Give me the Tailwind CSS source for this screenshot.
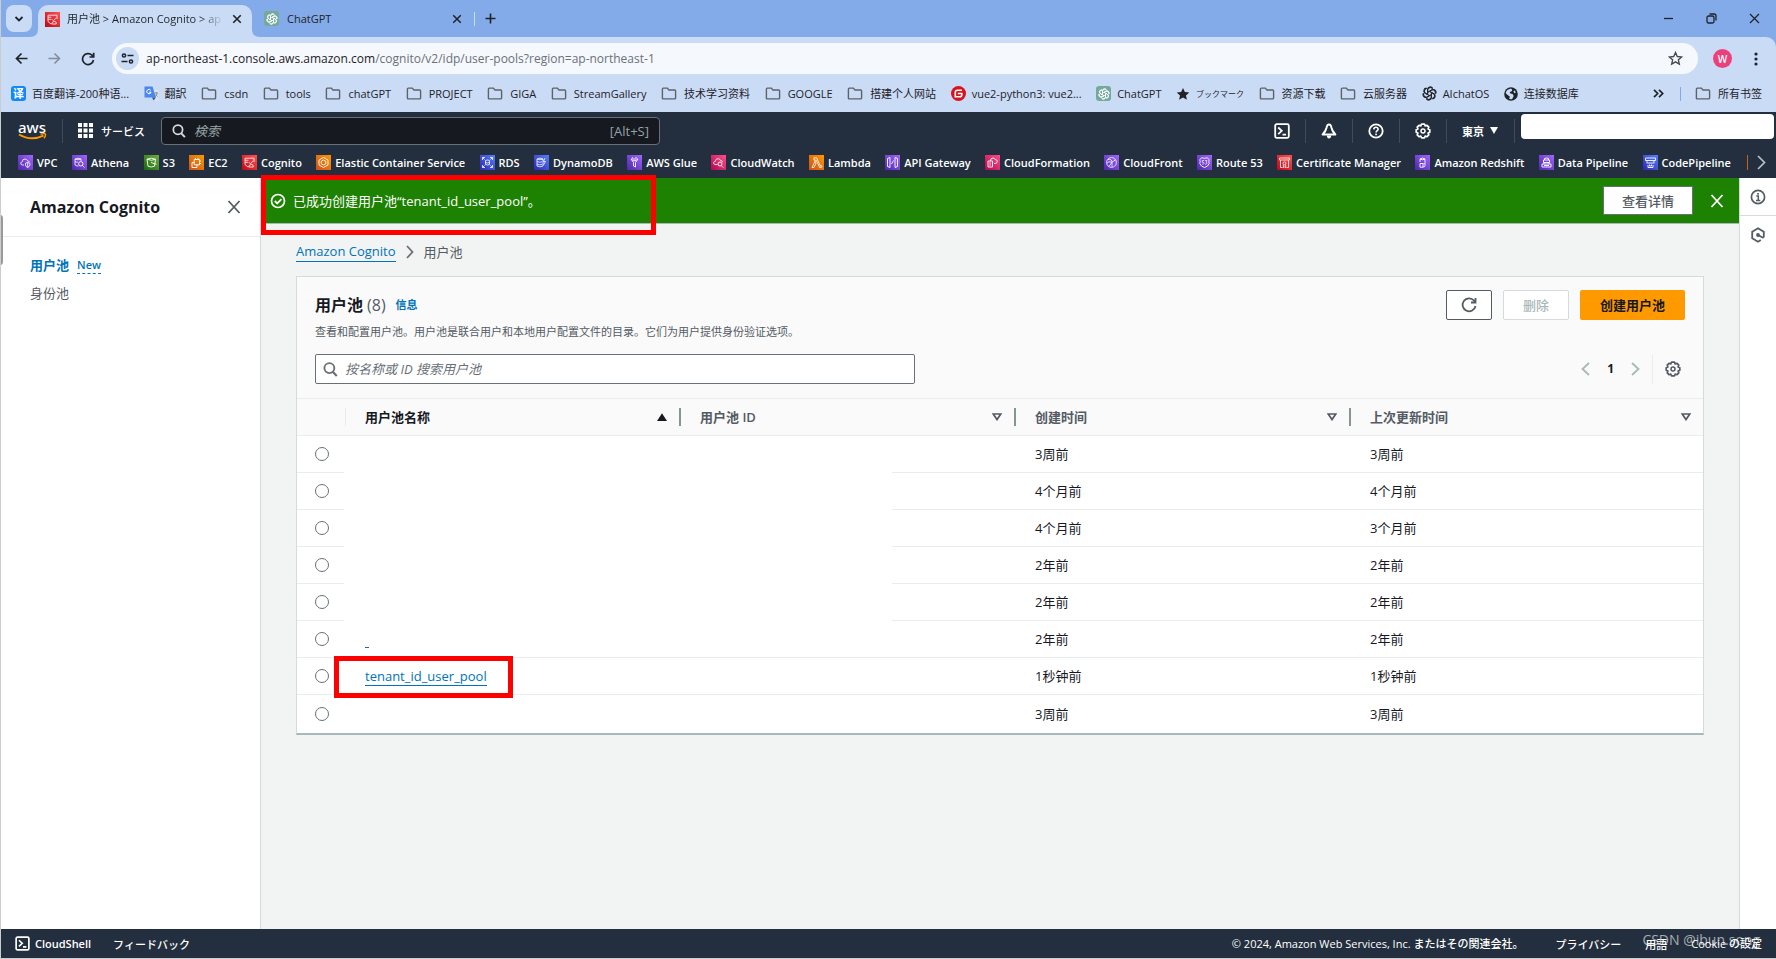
<!DOCTYPE html>
<html lang="zh-CN">
<head>
<meta charset="utf-8">
<title>用户池 &gt; Amazon Cognito</title>
<script src="https://cdn.jsdelivr.net/npm/@tailwindcss/browser@4"></script>
</head>
<body class="relative flex min-h-screen flex-col overflow-x-hidden border-b border-l border-[#c9cdd2] bg-[#f2f3f3] font-['Open_Sans','Noto_Sans_CJK_SC',sans-serif] text-[13px] leading-5 text-[#16191f]">

<svg class="absolute size-0" aria-hidden="true">
  <defs>
    <linearGradient id="gp" x1="0" y1="1" x2="1" y2="0"><stop offset="0" stop-color="#4d27aa"/><stop offset="1" stop-color="#a166ff"/></linearGradient>
    <linearGradient id="gg" x1="0" y1="1" x2="1" y2="0"><stop offset="0" stop-color="#1b660f"/><stop offset="1" stop-color="#6cae3e"/></linearGradient>
    <linearGradient id="go" x1="0" y1="1" x2="1" y2="0"><stop offset="0" stop-color="#c8511b"/><stop offset="1" stop-color="#ff9900"/></linearGradient>
    <linearGradient id="gr" x1="0" y1="1" x2="1" y2="0"><stop offset="0" stop-color="#bd0816"/><stop offset="1" stop-color="#ff5252"/></linearGradient>
    <linearGradient id="gb" x1="0" y1="1" x2="1" y2="0"><stop offset="0" stop-color="#2e27ad"/><stop offset="1" stop-color="#527fff"/></linearGradient>
    <linearGradient id="gk" x1="0" y1="1" x2="1" y2="0"><stop offset="0" stop-color="#b0084d"/><stop offset="1" stop-color="#ff4f8b"/></linearGradient>
    <symbol id="folder" viewBox="0 0 16 14"><path d="M1.8 1.2h4.4l1.7 2h6.3q.9 0 .9.9v7.8q0 .9-.9.9H1.8q-.9 0-.9-.9V2.1q0-.9.9-.9z" fill="none" stroke="#5f6368" stroke-width="1.5"/></symbol>
    <symbol id="knot" viewBox="0 0 24 24"><g fill="none" stroke="currentColor" stroke-width="1.7"><path id="kn" d="M9 10.3V5.6a4.3 4.3 0 0 1 8-2.1M9 10.3l6.5-3.8a4.3 4.3 0 0 1 5.3 6.2"/><use href="#kn" transform="rotate(60 12 12)"/><use href="#kn" transform="rotate(120 12 12)"/><use href="#kn" transform="rotate(180 12 12)"/><use href="#kn" transform="rotate(240 12 12)"/><use href="#kn" transform="rotate(300 12 12)"/></g></symbol>
    <symbol id="gear" viewBox="0 0 16 16"><path d="M6.500 1.200h3l.7 1.700 1.800-.6 1.800 1.900-.7 1.700 1.700.8v2.600l-1.700.8.7 1.700-1.800 1.900-1.800-.6-.7 1.700h-3l-.7-1.700-1.800.6-1.800-1.900.7-1.700-1.700-.8V6.700l1.700-.8-.7-1.700L4 2.300l1.800.6z" fill="none" stroke="currentColor" stroke-width="1.700" stroke-linejoin="round"/><circle cx="8" cy="8" r="2" fill="none" stroke="currentColor" stroke-width="1.500"/></symbol>
    <symbol id="cross" viewBox="0 0 16 16"><path d="M2.500 2l11 12M13.500 2l-11 12" fill="none" stroke="currentColor" stroke-width="1.800"/></symbol>
    <symbol id="lens" viewBox="0 0 16 16"><circle cx="6.800" cy="6.500" r="5.300" fill="none" stroke="currentColor" stroke-width="2"/><path d="M10.400 10.400l4.300 4.600" stroke="currentColor" stroke-width="2.300"/></symbol>
    <symbol id="shell" viewBox="0 0 16 16"><rect x="1.200" y="1.200" width="13.600" height="13.600" rx="1.500" fill="none" stroke="currentColor" stroke-width="1.800"/><path d="M4.200 4.500l3.600 3.300-3.600 3.300M8.500 11.600h3.600" fill="none" stroke="currentColor" stroke-width="1.700"/></symbol>
    <symbol id="cog" viewBox="0 0 15 15"><rect width="15" height="15" fill="url(#gr)"/><path d="M3 5V3.200h9V7M3 5.200h3.400M3 7.300h3.400M6 12l-3-2.500V5M7.200 7.500l1.300 1.300 2.300-2.600M6.500 12h4.800q.6-2-1.600-2.600-2.600 0-3.200 2.600z" fill="none" stroke="#fff" stroke-width=".8"/></symbol>
    <symbol id="sort" viewBox="0 0 10 8"><path d="M1.200 1h7.600L5 6.600z" fill="none" stroke="#545b64" stroke-width="1.700"/></symbol>
  </defs>
</svg>

<!-- Tab strip -->
<header class="flex flex-col bg-[#84abe9] text-[12px] text-[#1f2328]">
  <div class="flex h-[37px] items-center pl-[5px] pr-4">
    <button aria-label="标签页搜索" class="flex h-[27px] w-[26px] items-center justify-center rounded-lg bg-[#cadbf6]"><svg class="size-[10px]" viewBox="0 0 10 10"><path d="M1.500 3L5 6.500 8.500 3" fill="none" stroke="#1f2328" stroke-width="1.800"/></svg></button>
    <div class="relative ml-1.5 flex h-8 w-[214px] items-center self-end rounded-t-[10px] bg-[#cadbf6] pb-1 pl-[7px] pr-2.5">
      <svg class="absolute -left-2 bottom-0 size-2" viewBox="0 0 8 8"><path d="M8 0v8H0q8 0 8-8z" fill="#cadbf6"/></svg>
      <svg class="absolute -right-2 bottom-0 size-2" viewBox="0 0 8 8"><path d="M0 0v8h8q-8 0-8-8z" fill="#cadbf6"/></svg>
      <svg class="size-[15px] shrink-0"><use href="#cog"/></svg>
      <span class="ml-[7px] w-[156px] whitespace-nowrap bg-linear-to-r from-[#1f2328] from-85% to-[#cadbf6] bg-clip-text text-[11px] text-transparent">用户池 &gt; Amazon Cognito &gt; ap</span>
      <button aria-label="关闭" class="ml-auto"><svg class="size-[10px]" viewBox="0 0 16 16"><path d="M2 2l12 12M14 2L2 14" stroke="#1f2328" stroke-width="2.600"/></svg></button>
    </div>
    <div class="flex w-[210px] items-center pl-3 text-[11px]">
      <span class="flex size-[15px] items-center justify-center rounded-[3px] bg-[#74aa9c] text-white"><svg class="size-3"><use href="#knot"/></svg></span>
      <span class="ml-2">ChatGPT</span>
      <button aria-label="关闭" class="ml-auto"><svg class="size-[10px]" viewBox="0 0 16 16"><path d="M2 2l12 12M14 2L2 14" stroke="#1f2328" stroke-width="2.400"/></svg></button>
    </div>
    <span class="ml-3 h-[14px] w-px bg-[#cadbf6]"></span>
    <button aria-label="新标签页" class="ml-2.5"><svg class="size-[11px]" viewBox="0 0 11 11"><path d="M5.500.500v10M.500 5.500h10" stroke="#1f2328" stroke-width="1.600"/></svg></button>
    <div class="ml-auto flex items-center gap-8">
      <button aria-label="最小化"><svg class="size-[11px]" viewBox="0 0 11 11"><path d="M1 5.500h9" stroke="#1f2328" stroke-width="1.300"/></svg></button>
      <button aria-label="还原"><svg class="size-[11px]" viewBox="0 0 11 11"><rect x="1" y="3" width="7" height="7" rx="1.500" fill="none" stroke="#1f2328" stroke-width="1.300"/><path d="M3.500 1h4.500q2 0 2 2v4.500" fill="none" stroke="#1f2328" stroke-width="1.300"/></svg></button>
      <button aria-label="关闭窗口"><svg class="size-[11px]" viewBox="0 0 11 11"><path d="M1 1l9 9M10 1l-9 9" stroke="#1f2328" stroke-width="1.200"/></svg></button>
    </div>
  </div>

  <!-- Toolbar -->
  <div class="flex h-[43px] items-center rounded-tr-[10px] bg-[#cadbf6] pl-[14px] pr-[18px]">
    <button aria-label="后退"><svg class="size-[13px]" viewBox="0 0 13 13"><path d="M12.500 6.500H1.500M6.500 1.500l-5 5 5 5" fill="none" stroke="#1f2328" stroke-width="1.700"/></svg></button>
    <button aria-label="前进" class="ml-5"><svg class="size-[13px]" viewBox="0 0 13 13"><path d="M.500 6.500h11M6.500 1.500l5 5-5 5" fill="none" stroke="#858d9b" stroke-width="1.600"/></svg></button>
    <button aria-label="刷新" class="ml-5"><svg class="size-[14px]" viewBox="0 0 14 14"><path d="M12.500 8A5.500 5.500 0 1 1 11 3.200L12.500 4.800M12.700.8V5H8.500" fill="none" stroke="#1f2328" stroke-width="1.700"/></svg></button>
    <div class="ml-[17px] flex h-[31px] flex-1 items-center rounded-full bg-[#f5f8fd] pl-1 pr-[15px]">
      <span class="flex size-[23px] items-center justify-center rounded-full bg-[#cadbf6]"><svg class="size-[13px]" viewBox="0 0 13 13"><g fill="none" stroke="#1f2328" stroke-width="1.500"><circle cx="3" cy="3.500" r="1.600"/><path d="M6.500 3.500H12.500M.500 9.500h6"/><circle cx="10" cy="9.500" r="1.600"/></g></svg></span>
      <span class="ml-[7px] text-[12px] text-[#1f2328]">ap-northeast-1.console.aws.amazon.com<span class="text-[#6b7179]">/cognito/v2/idp/user-pools?region=ap-northeast-1</span></span>
      <button aria-label="收藏" class="ml-auto"><svg class="size-[15px]" viewBox="0 0 24 24"><path d="M12 2.500l2.900 6.300 6.900.7-5.200 4.600 1.500 6.800L12 17.400l-6.100 3.500 1.500-6.800-5.200-4.600 6.900-.7z" fill="none" stroke="#45494f" stroke-width="2.200"/></svg></button>
    </div>
    <span class="ml-[15px] flex size-[19px] items-center justify-center rounded-full bg-[#ec407a] text-[10px] font-semibold text-white">W</span>
    <button aria-label="菜单" class="ml-[22px]"><svg class="h-[14px] w-1" viewBox="0 0 4 14"><g fill="#1f2328"><circle cx="2" cy="2" r="1.600"/><circle cx="2" cy="7" r="1.600"/><circle cx="2" cy="12" r="1.600"/></g></svg></button>
  </div>

  <!-- Bookmarks -->
  <nav class="flex h-8 items-center whitespace-nowrap bg-[#cadbf6] pb-[5px] pl-2.5 pr-3.5 text-[11px]">
    <div class="flex w-[1568px] shrink-0 items-center justify-between">
      <a href="#" class="flex items-center gap-1.5"><span class="flex size-[15px] items-center justify-center rounded-[3px] bg-[#1389f5] font-bold text-white">译</span>百度翻译-200种语...</a>
      <a href="#" class="flex items-center gap-1.5"><svg class="size-[15px]" viewBox="0 0 15 15"><path d="M6 4h8.500v10.500H9z" fill="#dfe2e6"/><path d="M.500.500h8l3.500 11H.500z" fill="#4a86ec"/><path d="M8 11.500h4l-2.500 3z" fill="#2a56c6"/><path d="M6.800 4.300a2.200 2.200 0 1 0 .3 1.900H5" fill="none" stroke="#fff"/><path d="M10.500 7h3.500M12.200 6v1M13.300 7q-.5 2.500-2 3.500M11.500 8.500l2 2" stroke="#7a8088" stroke-width=".8" fill="none"/></svg>翻訳</a>
      <a href="#" class="flex items-center gap-[7px]"><svg class="h-[13px] w-4"><use href="#folder"/></svg>csdn</a>
      <a href="#" class="flex items-center gap-[7px]"><svg class="h-[13px] w-4"><use href="#folder"/></svg>tools</a>
      <a href="#" class="flex items-center gap-[7px]"><svg class="h-[13px] w-4"><use href="#folder"/></svg>chatGPT</a>
      <a href="#" class="flex items-center gap-[7px]"><svg class="h-[13px] w-4"><use href="#folder"/></svg>PROJECT</a>
      <a href="#" class="flex items-center gap-[7px]"><svg class="h-[13px] w-4"><use href="#folder"/></svg>GIGA</a>
      <a href="#" class="flex items-center gap-[7px]"><svg class="h-[13px] w-4"><use href="#folder"/></svg>StreamGallery</a>
      <a href="#" class="flex items-center gap-[7px]"><svg class="h-[13px] w-4"><use href="#folder"/></svg>技术学习资料</a>
      <a href="#" class="flex items-center gap-[7px]"><svg class="h-[13px] w-4"><use href="#folder"/></svg>GOOGLE</a>
      <a href="#" class="flex items-center gap-[7px]"><svg class="h-[13px] w-4"><use href="#folder"/></svg>搭建个人网站</a>
      <a href="#" class="flex items-center gap-1.5"><svg class="size-[15px]" viewBox="0 0 15 15"><circle cx="7.500" cy="7.500" r="7.500" fill="#d8121f"/><path d="M11 4.300H6.500q-2.200 0-2.200 2.200v4.200h4.500q2 0 2-2V7.500H6.800" fill="none" stroke="#fff" stroke-width="1.600"/></svg>vue2-python3: vue2...</a>
      <a href="#" class="flex items-center gap-1.5"><span class="flex size-[15px] items-center justify-center rounded-[3px] bg-[#74aa9c] text-white"><svg class="size-3"><use href="#knot"/></svg></span>ChatGPT</a>
      <a href="#" class="flex items-center gap-1.5"><svg class="size-[14px]" viewBox="0 0 24 24"><path d="M12 1.500l3.200 7 7.600.8-5.700 5.100 1.600 7.500L12 18.100l-6.700 3.800 1.600-7.500L1.200 9.300l7.600-.8z" fill="#1f2328"/></svg><span lang="ja" class="font-['Noto_Sans_CJK_JP',sans-serif] text-[8px]">ブックマーク</span></a>
      <a href="#" class="flex items-center gap-[7px]"><svg class="h-[13px] w-4"><use href="#folder"/></svg>资源下载</a>
      <a href="#" class="flex items-center gap-[7px]"><svg class="h-[13px] w-4"><use href="#folder"/></svg>云服务器</a>
      <a href="#" class="flex items-center gap-1.5"><svg class="size-[15px]"><use href="#knot"/></svg>AIchatOS</a>
      <a href="#" class="flex items-center gap-1.5"><svg class="size-[14px]" viewBox="0 0 14 14"><circle cx="7" cy="7" r="6.800" fill="#1f2328"/><path d="M7 1.600q2 1 .8 2.600l-2 .8.5 1.600 2.400.4 1 2-1.500 3q-2 .6-3-.2l.6-2.200L3.600 8 1.700 6.200Q2.200 2.500 7 1.600zM10 3.200l2 2-1.500 1-1-1.500z" fill="#cadbf6"/></svg>连接数据库</a>
    </div>
    <button aria-label="更多书签" class="ml-auto"><svg class="h-[9px] w-[11px]" viewBox="0 0 11 9"><path d="M1 .8l3.700 3.700L1 8.200M6 .8l3.700 3.700L6 8.200" fill="none" stroke="#1f2328" stroke-width="1.700"/></svg></button>
    <span class="ml-4 mr-3.5 h-[14px] w-px bg-[#7fabee]"></span>
    <a href="#" class="flex items-center gap-[7px]"><svg class="h-[13px] w-4"><use href="#folder"/></svg>所有书签</a>
  </nav>
</header>

<!-- AWS console header -->
<div class="flex h-[66px] flex-col bg-[#232f3e] text-white">
  <div class="flex h-[37px] items-center">
    <a href="#" aria-label="AWS" class="ml-4 flex w-[30px] flex-col items-center"><span class="font-['Noto_Sans'] text-[15px] font-medium leading-[12px]">aws</span><svg class="h-[7px] w-[29px]" viewBox="0 0 29 7"><path d="M1 1.500q12 7 24.500 1.200" fill="none" stroke="#f90" stroke-width="1.900"/><path d="M22.500 1.200q4.500-1.200 5 0 .3 1.800-1.500 4" fill="none" stroke="#f90" stroke-width="1.400"/></svg></a>
    <span class="ml-[15px] h-6 w-px bg-[#3f4b59]"></span>
    <button class="ml-[15px] flex items-center gap-2 text-[11px] font-medium"><svg class="size-[15px]" viewBox="0 0 15 15"><path d="M0 0h4v4H0zM5.500 0h4v4h-4zM11 0h4v4h-4zM0 5.500h4v4H0zM5.500 5.500h4v4h-4zM11 5.500h4v4h-4zM0 11h4v4H0zM5.500 11h4v4h-4zM11 11h4v4h-4z" fill="#fff"/></svg><span lang="ja" class="font-['Noto_Sans_CJK_JP',sans-serif]">サービス</span></button>
    <label class="ml-4 flex h-7 w-[499px] items-center rounded-sm border border-[#687078] bg-[#16191f] px-2.5">
      <svg class="size-[14px] text-[#d5dbdb]"><use href="#lens"/></svg>
      <input type="search" aria-label="検索" placeholder="検索" class="ml-2 min-w-0 flex-1 bg-transparent font-['Noto_Sans_CJK_JP',sans-serif] text-[13px] italic outline-none placeholder:text-[#95a5a6]">
      <span class="text-[13px] text-[#95a5a6]">[Alt+S]</span>
    </label>
    <div class="ml-auto flex items-center">
      <button aria-label="CloudShell"><svg class="size-4"><use href="#shell"/></svg></button>
      <span class="mx-[15px] h-6 w-px bg-[#3f4b59]"></span>
      <button aria-label="通知"><svg class="size-4" viewBox="0 0 16 16"><path d="M8 1.500q2 0 2.400 3 .6 3.500 4 7H1.600q3.400-3.500 4-7Q6 1.500 8 1.500z" fill="none" stroke="#fff" stroke-width="1.900" stroke-linejoin="round"/><path d="M5.800 12.500h4.400q-.2 3-2.200 3t-2.200-3z" fill="#fff"/></svg></button>
      <span class="mx-[15px] h-6 w-px bg-[#3f4b59]"></span>
      <button aria-label="帮助"><svg class="size-4" viewBox="0 0 16 16"><circle cx="8" cy="8" r="6.700" fill="none" stroke="#fff" stroke-width="1.800"/><path d="M5.800 6.300q.2-2 2.200-2t2.200 1.800q0 1-1.200 1.800-.9.600-.9 1.600" fill="none" stroke="#fff" stroke-width="1.600"/><rect x="7.200" y="10.600" width="1.700" height="1.600" fill="#fff"/></svg></button>
      <span class="mx-[15px] h-6 w-px bg-[#3f4b59]"></span>
      <button aria-label="设置"><svg class="size-4"><use href="#gear"/></svg></button>
      <span class="mx-[15px] h-6 w-px bg-[#3f4b59]"></span>
      <button lang="ja" class="flex items-center gap-1.5 font-['Noto_Sans_CJK_JP',sans-serif] text-[11px] font-bold">東京<svg class="h-[7px] w-2" viewBox="0 0 8 7"><path d="M0 0h8L4 7z" fill="#fff"/></svg></button>
      <span class="ml-4 mr-1.5 h-6 w-px bg-[#3f4b59]"></span>
      <span class="mb-2.5 mr-0.5 mt-0.5 h-[25px] w-[253px] self-start rounded bg-white"></span>
    </div>
  </div>
  <nav class="flex h-[29px] items-center whitespace-nowrap pb-0.5 pr-2.5 text-[11px] font-semibold">
    <div class="ml-[17px] flex w-[1713px] shrink-0 items-center justify-between">
      <a href="#" class="flex items-center gap-1"><svg class="size-[15px]" viewBox="0 0 15 15"><rect width="15" height="15" fill="url(#gp)"/><path d="M6 10H4.200Q2.300 9.600 2.800 7.800q.4-1 1.500-1Q4.300 4 7 4q2 .1 2.500 1.900 1.800 0 1.900 1.300M7.500 8.200l2.200-.8 2.200.8v1.800q-.3 1.700-2.200 2.500-2-.8-2.200-2.500zM9.700 7.500v5" fill="none" stroke="#fff" stroke-width=".8"/></svg>VPC</a>
      <a href="#" class="flex items-center gap-1"><svg class="size-[15px]" viewBox="0 0 15 15"><rect width="15" height="15" fill="url(#gp)"/><path d="M3 4q3-1.500 6 0v2M3 4v6q2 1.300 3.500 1M3 4q3 1.500 6 0M3 6.500q1.300.8 3 .7M10.500 10.500l2 2" fill="none" stroke="#fff" stroke-width=".8"/><circle cx="8.800" cy="8.800" r="2.200" fill="none" stroke="#fff" stroke-width=".9"/></svg>Athena</a>
      <a href="#" class="flex items-center gap-1"><svg class="size-[15px]" viewBox="0 0 15 15"><rect width="15" height="15" fill="url(#gg)"/><path d="M3 4.200q4.500-2 8.500 0l-1 7q-3.200 1.600-6.500 0zM3 4.200q4.500 2.200 8.500 0M7 7.500l4.500 1.600 1 .2" fill="none" stroke="#fff" stroke-width=".9"/></svg>S3</a>
      <a href="#" class="flex items-center gap-1"><svg class="size-[15px]" viewBox="0 0 15 15"><rect width="15" height="15" fill="url(#go)"/><path d="M5.200 4.500h5.300v5.300H5.200zM5.200 7.500H3v5h5V9.800M6.500 4.500V3M9 4.500V3M10.500 6H12M10.500 8.500H12" fill="none" stroke="#fff" stroke-width=".9"/></svg>EC2</a>
      <a href="#" class="flex items-center gap-1"><svg class="size-[15px]"><use href="#cog"/></svg>Cognito</a>
      <a href="#" class="flex items-center gap-1"><svg class="size-[15px]" viewBox="0 0 15 15"><rect width="15" height="15" fill="url(#go)"/><path d="M10 3.500L7.500 2.500 3 5v5l4.500 2.500L12 10V5l-2-1M7.500 5L5.200 6.300v2.500L7.500 10l2.300-1.200V6.300z" fill="none" stroke="#fff" stroke-width=".9"/></svg>Elastic Container Service</a>
      <a href="#" class="flex items-center gap-1"><svg class="size-[15px]" viewBox="0 0 15 15"><rect width="15" height="15" fill="url(#gb)"/><path d="M2.500 5V2.500H5M10 2.500h2.500V5M12.500 10v2.500H10M5 12.500H2.500V10M2.500 2.500l2 2M12.500 2.500l-2 2M2.500 12.500l2-2M12.500 12.500l-2-2M5.500 5.500q2-1 4 0v4q-2 1-4 0zM5.500 7.500q2 1 4 0" fill="none" stroke="#fff" stroke-width=".8"/></svg>RDS</a>
      <a href="#" class="flex items-center gap-1"><svg class="size-[15px]" viewBox="0 0 15 15"><rect width="15" height="15" fill="url(#gb)"/><path d="M3 4q3-1.800 6 0v7q-3 1.700-6 0zM3 4q3 1.500 6 0M3 6.500q3 1.500 5 .3M3 9q3 1.500 5 .3M11 3l-1.500 3.500h2L9.500 10" fill="none" stroke="#fff" stroke-width=".8"/></svg>DynamoDB</a>
      <a href="#" class="flex items-center gap-1"><svg class="size-[15px]" viewBox="0 0 15 15"><rect width="15" height="15" fill="url(#gp)"/><path d="M4 4h7L8.500 7.500v4.500l-2-1V7.500zM5.500 5.700h4M5 2.800h1M8.500 2.500h1" fill="none" stroke="#fff" stroke-width=".9"/></svg>AWS Glue</a>
      <a href="#" class="flex items-center gap-1"><svg class="size-[15px]" viewBox="0 0 15 15"><rect width="15" height="15" fill="url(#gk)"/><path d="M6.500 9.500H4Q2.200 9 2.700 7.300q.5-1 1.600-.9Q4.500 3.700 7 3.700q2 .1 2.600 1.800 1.800 0 2 1.500M10.300 10.700l2 2" fill="none" stroke="#fff" stroke-width=".8"/><circle cx="9" cy="9" r="2" fill="none" stroke="#fff" stroke-width=".9"/></svg>CloudWatch</a>
      <a href="#" class="flex items-center gap-1"><svg class="size-[15px]" viewBox="0 0 15 15"><rect width="15" height="15" fill="url(#go)"/><path d="M5 2.800h2.500l4 8.200 1-.4.5 1.300-2.200.8-3.600-7.500H5zM6 6.200l1 2-2 4.300H3z" fill="none" stroke="#fff" stroke-width=".8"/></svg>Lambda</a>
      <a href="#" class="flex items-center gap-1"><svg class="size-[15px]" viewBox="0 0 15 15"><rect width="15" height="15" fill="url(#gp)"/><path d="M5 2.500L2.500 3.500v8L5 12.500zM10 2.500l2.500 1v8l-2.500 1zM6.500 9l2-3.500" fill="none" stroke="#fff" stroke-width=".9"/></svg>API Gateway</a>
      <a href="#" class="flex items-center gap-1"><svg class="size-[15px]" viewBox="0 0 15 15"><rect width="15" height="15" fill="url(#gk)"/><path d="M3 6h4.500v6H3zM4.200 8h2M4.200 10h2M5.500 6q-.2-3 2.500-3 1.500 0 2 1.500 2 0 2.300 1.700 0 2-2 2.200H9" fill="none" stroke="#fff" stroke-width=".9"/></svg>CloudFormation</a>
      <a href="#" class="flex items-center gap-1"><svg class="size-[15px]" viewBox="0 0 15 15"><rect width="15" height="15" fill="url(#gp)"/><circle cx="7.500" cy="7.500" r="4.900" fill="none" stroke="#fff" stroke-width=".8"/><path d="M4 4.500q4-1 4 3.500v4M8 7l3.500-2M5 11.500l3-4.500M3 8q2-2 4-1" fill="none" stroke="#fff" stroke-width=".8"/></svg>CloudFront</a>
      <a href="#" class="flex items-center gap-1"><svg class="size-[15px]" viewBox="0 0 15 15"><rect width="15" height="15" fill="url(#gp)"/><path d="M4.500 2.800q3 1 6 0l1.700 2q-.8 2 0 3.700-1 3-4.700 4-3.700-1-4.700-4 .8-1.700 0-3.700z" fill="none" stroke="#fff" stroke-width=".9"/><path d="M5.200 5.500h1.900M5.200 5.500v1.700q2-.2 1.800 1.200-.3 1-1.900.7M8.200 5.500h1.700L9 7q1.300.3.800 1.600-.6.800-1.600.5" fill="none" stroke="#fff" stroke-width=".7"/></svg>Route 53</a>
      <a href="#" class="flex items-center gap-1"><svg class="size-[15px]" viewBox="0 0 15 15"><rect width="15" height="15" fill="url(#gr)"/><path d="M2.500 3h10v2h-10zM3.500 5v7.500h2M11.500 5v7.500h-2M6.300 9.700v3l1.200-.8 1.200.8v-3" fill="none" stroke="#fff" stroke-width=".8"/><circle cx="7.500" cy="8.300" r="1.500" fill="none" stroke="#fff" stroke-width=".8"/></svg>Certificate Manager</a>
      <a href="#" class="flex items-center gap-1"><svg class="size-[15px]" viewBox="0 0 15 15"><rect width="15" height="15" fill="url(#gp)"/><path d="M5 4q2.500-1.800 5 0v3.500L8.500 9M5 4v3M5 4q2.500 1.500 5 0M5 8.500h3v3.700H5zM8 12q2 0 2-1V8" fill="none" stroke="#fff" stroke-width=".9"/></svg>Amazon Redshift</a>
      <a href="#" class="flex items-center gap-1"><svg class="size-[15px]" viewBox="0 0 15 15"><rect width="15" height="15" fill="url(#gp)"/><path d="M5.500 5V3.500q2-1 4 0V5M4.500 5h6v2.500h-6zM3 9h9v3H3zM5 7.500V9M10 7.500V9M5 10.500h5" fill="none" stroke="#fff" stroke-width=".9"/></svg>Data Pipeline</a>
      <a href="#" class="flex items-center gap-1"><svg class="size-[15px]" viewBox="0 0 15 15"><rect width="15" height="15" fill="url(#gb)"/><path d="M2.500 3h10v2.500h-10zM4 5.500v3M11 5.500v3M4.500 8h6M5 10v2.500h5V10M6.500 9.500v1.500h2V9.500" fill="none" stroke="#fff" stroke-width=".9"/></svg>CodePipeline</a>
    </div>
    <span class="ml-4 h-[15px] w-px bg-[#c8611b]"></span>
    <button aria-label="更多服务" class="ml-auto"><svg class="h-[15px] w-[9px]" viewBox="0 0 9 15"><path d="M1 1l6.500 6.500L1 14" fill="none" stroke="#b9c0c6" stroke-width="1.700"/></svg></button>
  </nav>
</div>

<!-- Console body -->
<div class="flex flex-1">
  <aside class="flex w-[260px] shrink-0 flex-col border-r border-[#d5dbdb] bg-white">
    <div class="flex h-[59px] items-center justify-between border-b border-[#eaeded] pl-[29px] pr-[18px]">
      <h2 class="text-[16px] font-bold">Amazon Cognito</h2>
      <button aria-label="关闭导航" class="text-[#545b64]"><svg class="size-4"><use href="#cross"/></svg></button>
    </div>
    <nav class="flex flex-col gap-2 pl-[29px] pt-[18px]">
      <div class="flex items-center gap-2"><a href="#" class="font-bold text-[#0073bb]">用户池</a><button class="border-b border-dashed border-[#0073bb] text-[11px] font-semibold leading-4 text-[#0073bb]">New</button></div>
      <a href="#" class="text-[#545b64]">身份池</a>
    </nav>
  </aside>

  <main class="flex min-w-0 flex-1 flex-col">
    <div class="flex h-[46px] items-center border-b border-[#aab7b8] bg-[#1d8102] pl-[9px] pr-3.5 text-white">
      <svg class="size-4" viewBox="0 0 16 16"><circle cx="8" cy="8" r="6.500" fill="none" stroke="#fff" stroke-width="1.700"/><path d="M4.800 8l2.400 2.400 4.200-4.300" fill="none" stroke="#fff" stroke-width="1.800"/></svg>
      <p class="ml-[7px]">已成功创建用户池“tenant_id_user_pool”。</p>
      <button class="ml-auto h-[29px] w-[90px] border border-[#687078] bg-white font-medium text-[#545b64]">查看详情</button>
      <button aria-label="关闭通知" class="ml-4"><svg class="size-4"><use href="#cross"/></svg></button>
    </div>
    <div class="flex flex-col pl-[35px] pr-[35px] pt-[17px]">
      <nav class="flex items-center gap-2.5 text-[#545b64]">
        <a href="#" class="border-b border-[#0073bb] text-[#0073bb]">Amazon Cognito</a>
        <svg class="h-[14px] w-2" viewBox="0 0 8 14"><path d="M1 1l5.500 6L1 13" fill="none" stroke="#687078" stroke-width="1.800"/></svg>
        <span>用户池</span>
      </nav>
      <section class="mt-3.5 flex flex-col border border-b-2 border-[#d5dbdb] border-b-[#aab7b8] bg-white">
        <div class="flex flex-col bg-[#fafafa] px-[18px] pb-[14px] pt-[13px]">
          <div class="flex items-start">
            <div>
              <div class="flex h-[30px] items-center gap-1"><h1 class="text-[16px] font-bold">用户池</h1><span class="text-[16px] text-[#545b64]">(8)</span><a href="#" class="ml-1.5 text-[11px] font-bold text-[#0073bb]">信息</a></div>
              <p class="mt-0.5 text-[11px] text-[#545b64]">查看和配置用户池。用户池是联合用户和本地用户配置文件的目录。它们为用户提供身份验证选项。</p>
            </div>
            <div class="ml-auto flex gap-[11px]">
              <button aria-label="刷新列表" class="flex h-[30px] w-[46px] items-center justify-center rounded-xs border border-[#545b64] bg-white"><svg class="size-4" viewBox="0 0 16 16"><path d="M14.500 9A6.500 6.500 0 1 1 13 3.500L14.500 5.200M14.500 1v4.500H10" fill="none" stroke="#545b64" stroke-width="1.800"/></svg></button>
              <button disabled class="h-[30px] w-[66px] rounded-xs border border-[#d5dbdb] bg-white font-medium text-[#aab7b8]">删除</button>
              <button class="h-[30px] w-[105px] rounded-xs bg-[#ff9900] font-bold text-[#16191f]">创建用户池</button>
            </div>
          </div>
          <div class="mt-3 flex items-center">
            <label class="flex h-[30px] w-[600px] items-center rounded-xs border border-[#687078] bg-white px-[7px]">
              <svg class="size-[15px] text-[#687078]"><use href="#lens"/></svg>
              <input type="search" aria-label="搜索用户池" placeholder="按名称或 ID 搜索用户池" class="ml-[7px] min-w-0 flex-1 italic outline-none placeholder:text-[#687078]">
            </label>
            <div class="ml-auto flex items-center text-[#aab7b8]">
              <button aria-label="上一页"><svg class="h-[14px] w-[9px]" viewBox="0 0 9 14"><path d="M8 1L1.500 7 8 13" fill="none" stroke="currentColor" stroke-width="1.800"/></svg></button>
              <span class="mx-[17px] text-[12px] font-bold text-[#16191f]">1</span>
              <button aria-label="下一页"><svg class="h-[14px] w-[9px]" viewBox="0 0 9 14"><path d="M1 1l6.500 6L1 13" fill="none" stroke="currentColor" stroke-width="1.800"/></svg></button>
              <span class="ml-3 mr-3 h-[29px] w-px bg-[#eaeded]"></span>
              <button aria-label="首选项" class="mr-1 text-[#545b64]"><svg class="size-4"><use href="#gear"/></svg></button>
            </div>
          </div>
        </div>
        <div class="relative">
          <table class="w-full table-fixed border-collapse text-left">
            <colgroup><col class="w-[49px]"><col class="w-[335px]"><col class="w-[335px]"><col class="w-[335px]"><col></colgroup>
            <thead>
              <tr class="h-[37px] border-y border-[#eaeded] bg-[#fafafa]">
                <th aria-label="选择" class="p-0"><div class="h-[18px] border-r border-[#eaeded]"></div></th>
                <th class="p-0 font-bold"><div class="flex h-[18px] items-center justify-between border-r-2 border-[#879596] pl-[19px] pr-3">用户池名称<svg class="h-2 w-[10px]" viewBox="0 0 10 8"><path d="M5 .3L10 8H0z" fill="#16191f"/></svg></div></th>
                <th class="p-0 font-semibold text-[#545b64]"><div class="flex h-[18px] items-center justify-between border-r-2 border-[#879596] pl-[19px] pr-3">用户池 ID<svg class="h-2 w-[10px]"><use href="#sort"/></svg></div></th>
                <th class="p-0 font-semibold text-[#545b64]"><div class="flex h-[18px] items-center justify-between border-r-2 border-[#879596] pl-[19px] pr-3">创建时间<svg class="h-2 w-[10px]"><use href="#sort"/></svg></div></th>
                <th class="p-0 font-semibold text-[#545b64]"><div class="flex h-[18px] items-center justify-between pl-[19px] pr-3">上次更新时间<svg class="h-2 w-[10px]"><use href="#sort"/></svg></div></th>
              </tr>
            </thead>
            <tbody>
              <tr class="h-[37px] border-b border-[#eaeded]"><td class="pl-[18px]"><input type="radio" name="pool" aria-label="用户池 1" class="block size-[14px] appearance-none rounded-full border border-[#687078]"></td><td></td><td></td><td class="pl-[19px]">3周前</td><td class="pl-[19px]">3周前</td></tr>
              <tr class="h-[37px] border-b border-[#eaeded]"><td class="pl-[18px]"><input type="radio" name="pool" aria-label="用户池 2" class="block size-[14px] appearance-none rounded-full border border-[#687078]"></td><td></td><td></td><td class="pl-[19px]">4个月前</td><td class="pl-[19px]">4个月前</td></tr>
              <tr class="h-[37px] border-b border-[#eaeded]"><td class="pl-[18px]"><input type="radio" name="pool" aria-label="用户池 3" class="block size-[14px] appearance-none rounded-full border border-[#687078]"></td><td></td><td></td><td class="pl-[19px]">4个月前</td><td class="pl-[19px]">3个月前</td></tr>
              <tr class="h-[37px] border-b border-[#eaeded]"><td class="pl-[18px]"><input type="radio" name="pool" aria-label="用户池 4" class="block size-[14px] appearance-none rounded-full border border-[#687078]"></td><td></td><td></td><td class="pl-[19px]">2年前</td><td class="pl-[19px]">2年前</td></tr>
              <tr class="h-[37px] border-b border-[#eaeded]"><td class="pl-[18px]"><input type="radio" name="pool" aria-label="用户池 5" class="block size-[14px] appearance-none rounded-full border border-[#687078]"></td><td></td><td></td><td class="pl-[19px]">2年前</td><td class="pl-[19px]">2年前</td></tr>
              <tr class="h-[37px] border-b border-[#eaeded]"><td class="pl-[18px]"><input type="radio" name="pool" aria-label="用户池 6" class="block size-[14px] appearance-none rounded-full border border-[#687078]"></td><td class="pl-[19px]"><a href="#" aria-label="用户池 6 链接" class="block h-[18px] w-1 border-b border-[#0073bb]"></a></td><td></td><td class="pl-[19px]">2年前</td><td class="pl-[19px]">2年前</td></tr>
              <tr class="h-[37px] border-b border-[#eaeded]"><td class="pl-[18px]"><input type="radio" name="pool" aria-label="tenant_id_user_pool" class="block size-[14px] appearance-none rounded-full border border-[#687078]"></td><td class="relative pl-[19px]"><a href="#" class="border-b border-[#0073bb] text-[#0073bb]">tenant_id_user_pool</a><span class="pointer-events-none absolute -left-3 -top-0.5 h-[42px] w-[179px] border-5 border-[#ff0000]"></span></td><td></td><td class="pl-[19px]">1秒钟前</td><td class="pl-[19px]">1秒钟前</td></tr>
              <tr class="h-[38px]"><td class="pl-[18px]"><input type="radio" name="pool" aria-label="用户池 8" class="block size-[14px] appearance-none rounded-full border border-[#687078]"></td><td></td><td></td><td class="pl-[19px]">3周前</td><td class="pl-[19px]">3周前</td></tr>
            </tbody>
          </table>
          <div class="absolute left-[47px] top-[38px] h-[205px] w-[548px] bg-white"></div>
        </div>
      </section>
    </div>
  </main>

  <aside class="flex w-[37px] shrink-0 flex-col border-l border-[#d5dbdb] bg-white text-[#545b64]">
    <button aria-label="信息" class="flex h-[38px] items-center justify-center border-b border-[#d5dbdb]"><svg class="size-4" viewBox="0 0 16 16"><circle cx="8" cy="8" r="6.600" fill="none" stroke="currentColor" stroke-width="1.700"/><path d="M6.300 7H8.300v4.300M6 11.500h4.300" fill="none" stroke="currentColor" stroke-width="1.500"/><rect x="7.200" y="4" width="1.700" height="1.700" fill="currentColor"/></svg></button>
    <button aria-label="工具" class="flex h-[38px] items-center justify-center"><svg class="size-4" viewBox="0 0 16 16"><path d="M13.800 10.500V4.800L8 1.300 2.200 4.800v6.400L8 14.700l2.800-1.700M8 8l5.500 3" fill="none" stroke="currentColor" stroke-width="1.800"/><circle cx="8" cy="8" r="1.900" fill="currentColor"/></svg></button>
  </aside>
</div>

<!-- Footer -->
<footer class="relative flex h-[29px] items-center whitespace-nowrap bg-[#232f3e] pl-3.5 pr-3.5 text-[11px] font-semibold text-white">
  <button class="flex items-center gap-[5px]"><svg class="size-[15px]"><use href="#shell"/></svg>CloudShell</button>
  <a href="#" lang="ja" class="ml-[22px] font-['Noto_Sans_CJK_JP',sans-serif] font-medium">フィードバック</a>
  <span lang="ja" class="ml-auto font-['Open_Sans','Noto_Sans_CJK_JP',sans-serif] font-medium">© 2024, Amazon Web Services, Inc. またはその関連会社。</span>
  <a href="#" lang="ja" class="ml-8 font-['Noto_Sans_CJK_JP',sans-serif] font-medium">プライバシー</a>
  <a href="#" lang="ja" class="ml-6 font-['Noto_Sans_CJK_JP',sans-serif] font-medium">用語</a>
  <a href="#" lang="ja" class="ml-6 font-['Open_Sans','Noto_Sans_CJK_JP',sans-serif] font-medium">Cookie の設定</a>
  <span class="pointer-events-none absolute bottom-2 right-4 text-[14px] font-normal text-white/60">CSDN @ibun.song</span>
</footer>

<!-- Window edge handle and highlight frame -->
<span class="absolute -left-px top-0 h-[60px] w-px bg-[#2e7d4f]"></span>
<span class="absolute -left-px top-[215px] h-[50px] w-[3px] rounded-r bg-[#9a9a9a]"></span>
<span class="pointer-events-none absolute left-[260px] top-[175px] h-[60px] w-[395px] border-5 border-[#ff0000]"></span>
</body>
</html>
